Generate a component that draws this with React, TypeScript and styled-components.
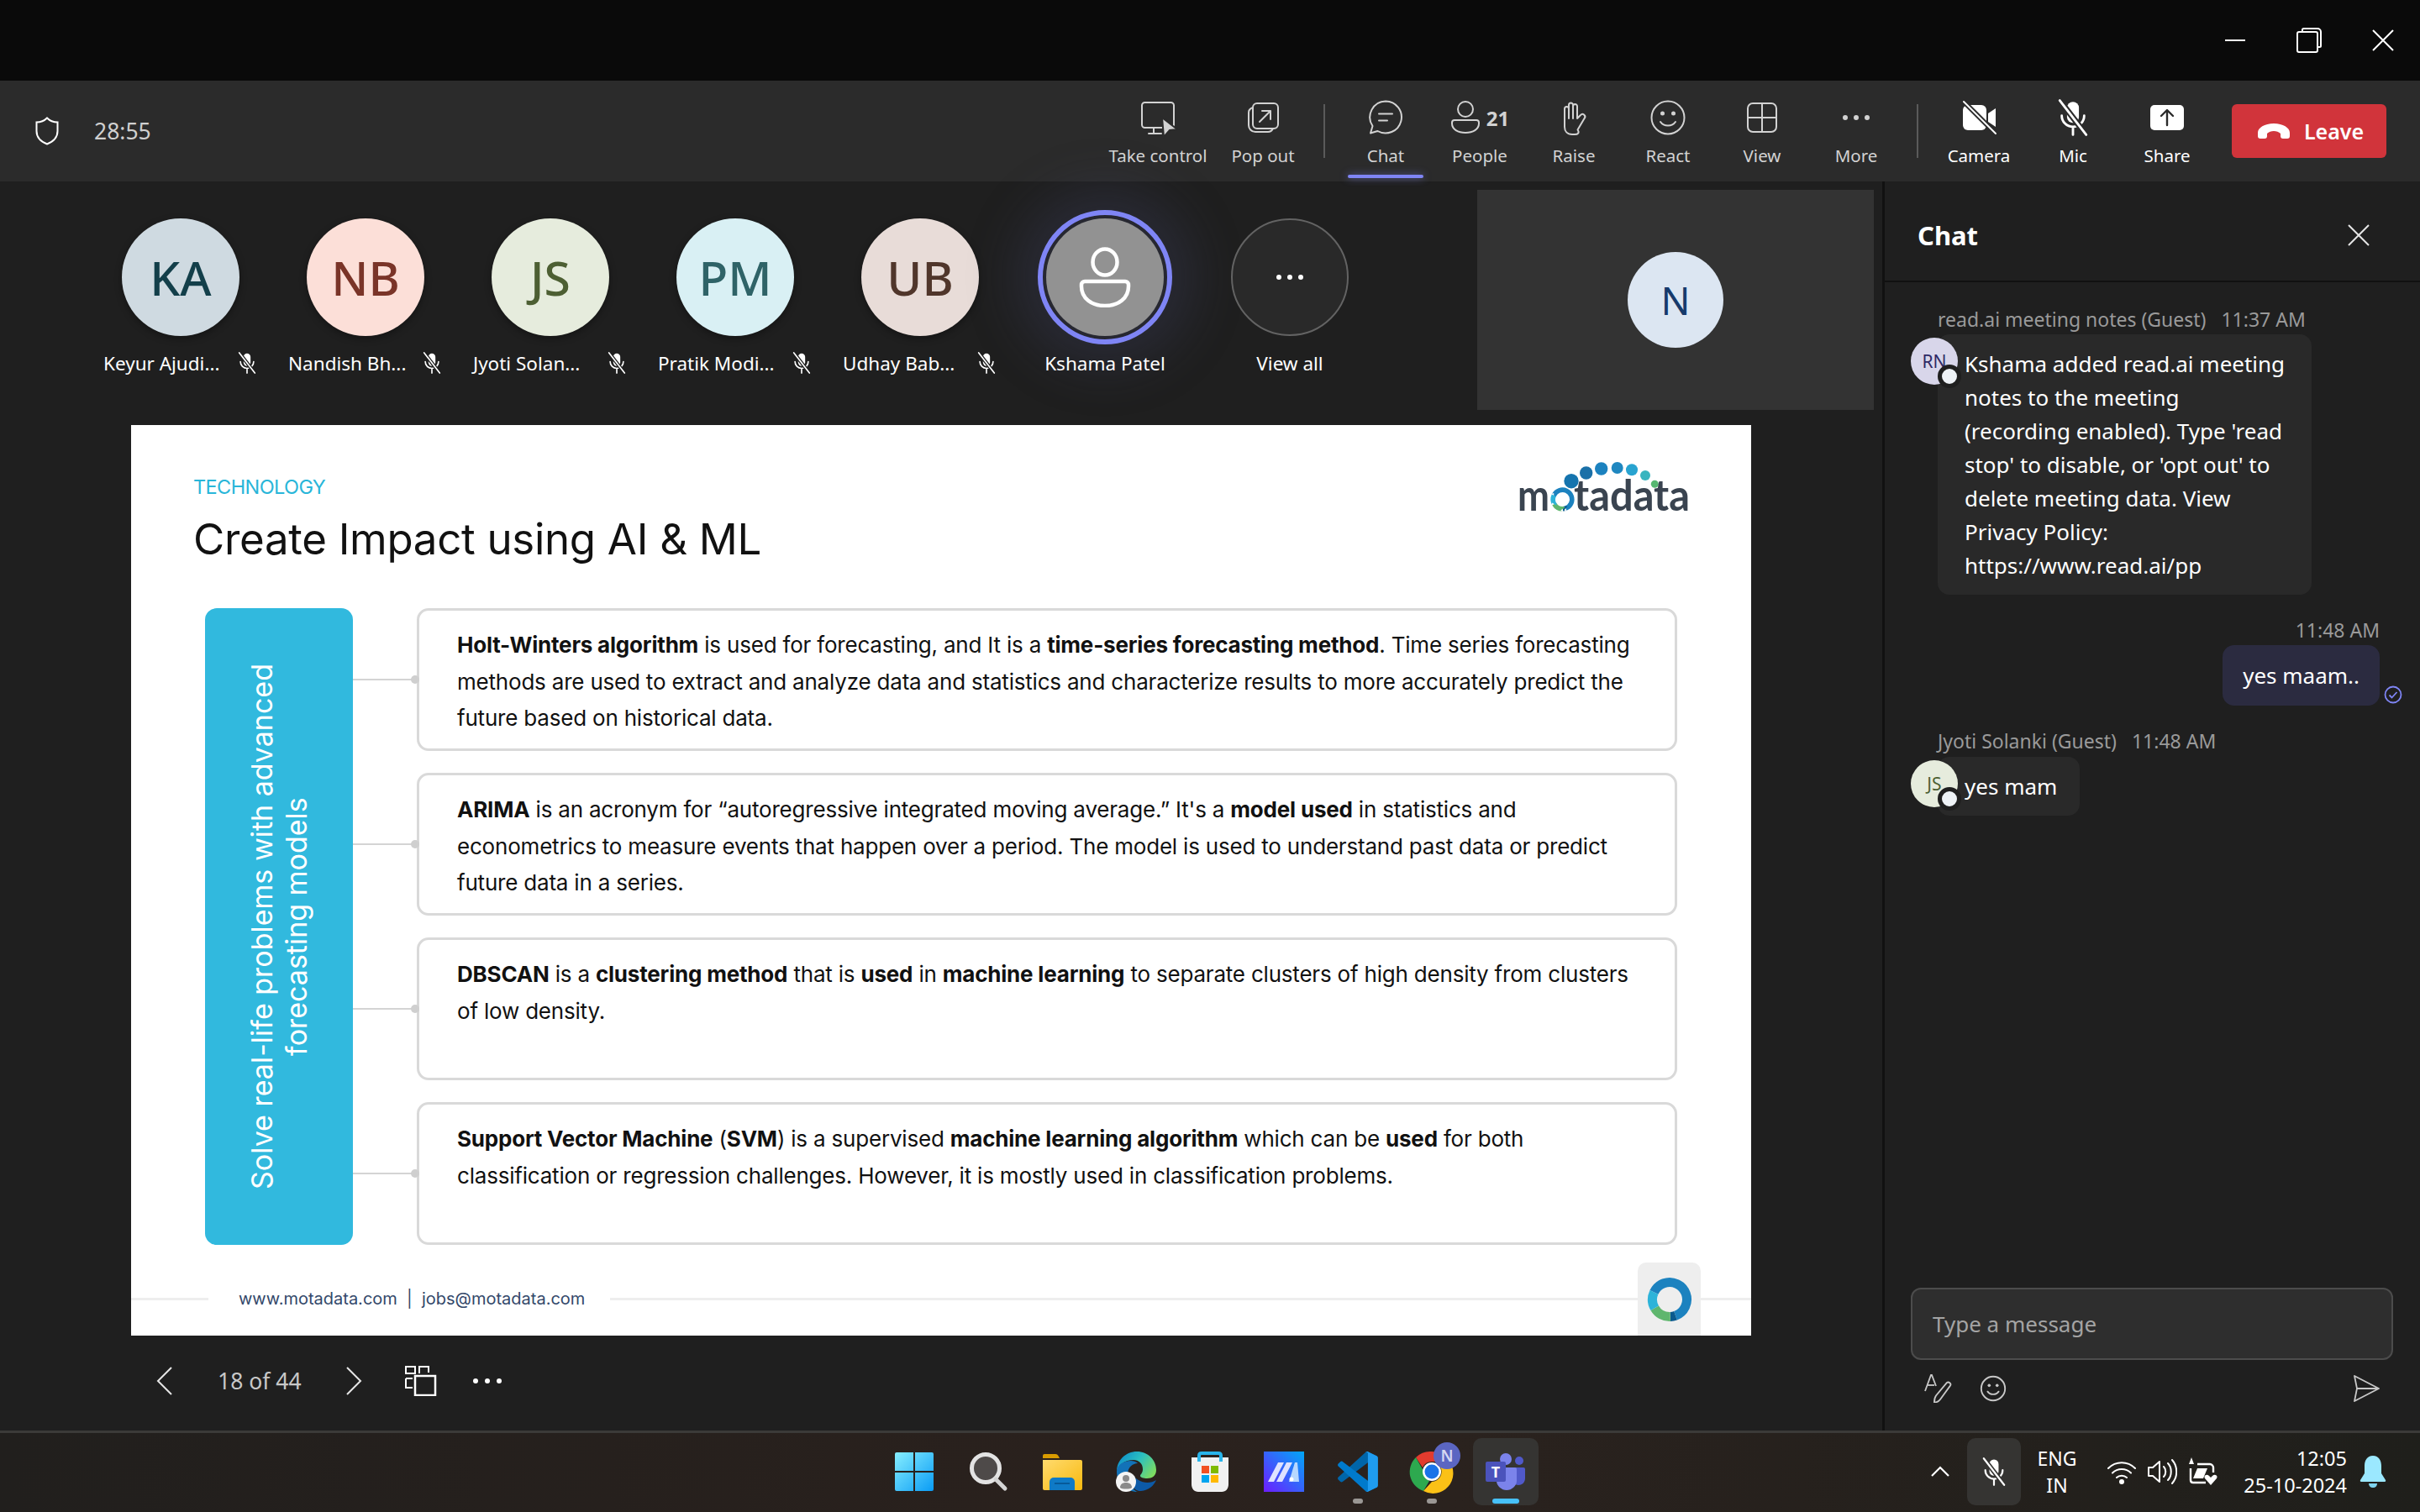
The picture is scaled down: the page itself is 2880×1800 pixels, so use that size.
import React from "react";
import styled, { createGlobalStyle } from "styled-components";

const GlobalStyle = createGlobalStyle`
  html, body {
    margin: 0;
    padding: 0;
    background: #1f1f1f;
  }
  * {
    box-sizing: border-box;
  }
`;

const Page = styled.div`
  width: 2880px;
  height: 1800px;
  display: grid;
  grid-template-rows: 96px 120px 1487px 97px;
  font-family: "Noto Sans", "Open Sans", sans-serif;
  color: #fff;
  overflow: hidden;
`;

/* title bar */
const TitleBar = styled.div`
  background: #0a0a0a;
  display: flex;
  justify-content: flex-end;
`;
const WindowButton = styled.div`
  width: 88px;
  display: flex;
  align-items: center;
  justify-content: center;
`;

/* meeting toolbar */
const Toolbar = styled.div`
  background: #2b2b2b;
  display: flex;
  align-items: stretch;
  padding-right: 40px;
`;
const Timer = styled.div`
  display: flex;
  align-items: center;
  gap: 42px;
  padding-left: 42px;
  margin-right: auto;
  font-size: 26.5px;
  color: #d0d0d0;
`;
const ToolItem = styled.div<{ $width?: number; $active?: boolean; $strong?: boolean }>`
  width: ${(p) => p.$width || 112}px;
  position: relative;
  display: flex;
  flex-direction: column;
  align-items: center;
  padding-top: 22px;
  font-size: 20.5px;
  color: ${(p) => (p.$strong ? "#fff" : "#d2d2d2")};
  ${(p) =>
    p.$active &&
    `&::after {
      content: "";
      position: absolute;
      left: 11px;
      right: 11px;
      bottom: 4px;
      height: 4px;
      border-radius: 2px;
      background: #7f85f5;
      box-shadow: 0 0 10px rgba(127, 133, 245, 0.6);
    }`}
`;
const ToolIcon = styled.div`
  height: 44px;
  display: flex;
  align-items: center;
  gap: 7px;
  font-size: 24px;
  font-weight: 700;
`;
const ToolLabel = styled.div`
  margin-top: 8px;
  line-height: 30px;
  white-space: nowrap;
`;
const ToolDivider = styled.div`
  width: 2px;
  height: 64px;
  margin: 28px 16px 0;
  background: #5a5a5a;
`;
const LeaveButton = styled.div`
  width: 184px;
  height: 64px;
  margin: 28px 0 0 21px;
  border-radius: 6px;
  background: #d1343b;
  display: flex;
  align-items: center;
  justify-content: center;
  gap: 16px;
  padding-left: 3px;
  font-size: 25px;
  font-weight: 600;
`;

/* main area */
const Main = styled.div`
  display: flex;
  background: #1f1f1f;
`;
const Stage = styled.div`
  width: 2240px;
  display: flex;
  flex-direction: column;
`;
const Strip = styled.div`
  height: 290px;
  display: flex;
  padding: 10px 10px 0 105px;
`;
const Participant = styled.div`
  width: 220px;
  padding-top: 34px;
  display: flex;
  flex-direction: column;
  align-items: center;
`;
const Bubble140 = styled.div<{ $bg: string; $fg: string }>`
  width: 140px;
  height: 140px;
  border-radius: 50%;
  background: ${(p) => p.$bg};
  color: ${(p) => p.$fg};
  display: flex;
  align-items: center;
  justify-content: center;
  font-size: 57px;
  font-weight: 500;
  box-shadow: 0 3px 8px rgba(0, 0, 0, 0.35);
`;
const ActiveBubble = styled(Bubble140)`
  outline: 6px solid #7f85f5;
  outline-offset: 4px;
  box-shadow: 0 0 60px 36px rgba(70, 72, 110, 0.28);
`;
const MoreBubble = styled(Bubble140)`
  border: 2px solid #636363;
  box-shadow: none;
`;
const NameRow = styled.div`
  margin-top: 14px;
  height: 36px;
  display: flex;
  align-items: center;
  font-size: 22.5px;
  white-space: nowrap;
`;
const NameText = styled.span<{ $cut?: boolean }>`
  width: ${(p) => (p.$cut ? "140px" : "auto")};
  margin-right: ${(p) => (p.$cut ? "18px" : "0")};
`;
const SelfTile = styled.div`
  width: 472px;
  height: 262px;
  margin-left: auto;
  background: #333333;
  display: flex;
  align-items: center;
  justify-content: center;
`;
const SelfAvatar = styled.div`
  width: 114px;
  height: 114px;
  border-radius: 50%;
  background: #dce6f2;
  color: #163a6b;
  display: flex;
  align-items: center;
  justify-content: center;
  font-size: 46px;
`;

/* the slide */
const Slide = styled.div`
  width: 1928px;
  height: 1084px;
  margin-left: 156px;
  background: #fff;
  color: #111;
  position: relative;
  font-family: Inter, "Open Sans", sans-serif;
  display: flex;
  flex-direction: column;
`;
const SlideHead = styled.div`
  height: 218px;
  padding: 42px 0 0 74px;
  display: flex;
  justify-content: space-between;
  align-items: flex-start;
  overflow: hidden;
`;
const HeadText = styled.div`
  padding-top: 17px;
`;
const Kicker = styled.div`
  font-size: 23.5px;
  line-height: 30px;
  letter-spacing: -0.6px;
  color: #29b6d9;
`;
const SlideTitle = styled.h1`
  margin: 15px 0 0;
  font-size: 51px;
  line-height: 64px;
  font-weight: 400;
  letter-spacing: -0.3px;
`;
const SlideBody = styled.div`
  height: 758px;
  padding: 0 88px;
  display: flex;
`;
const SidePanel = styled.div`
  width: 176px;
  border-radius: 14px;
  background: #31b9de;
  color: #fff;
  display: flex;
  align-items: center;
  justify-content: center;
  font-size: 34px;
  line-height: 41px;
  text-align: center;
  span {
    writing-mode: vertical-rl;
    transform: rotate(180deg);
    white-space: nowrap;
  }
`;
const Rows = styled.div`
  flex: 1;
  display: flex;
  flex-direction: column;
  gap: 26px;
`;
const Row = styled.div`
  flex: 1;
  display: flex;
  align-items: center;
`;
const Connector = styled.div`
  width: 76px;
  height: 2px;
  background: #d4d4d4;
  position: relative;
  &::after {
    content: "";
    position: absolute;
    right: -3px;
    top: -4px;
    width: 10px;
    height: 10px;
    border-radius: 50%;
    background: #cfcfcf;
  }
`;
const Card = styled.div`
  flex: 1;
  height: 100%;
  border: 3px solid #d9d9d9;
  border-radius: 14px;
  padding: 19px 30px 0 45px;
  font-size: 26px;
  line-height: 43.5px;
  letter-spacing: -0.2px;
  white-space: nowrap;
  b {
    font-weight: 700;
    letter-spacing: -0.2px;
  }
`;
const SlideFoot = styled.div`
  flex: 1;
  padding-top: 40px;
`;
const FootRow = styled.div`
  height: 48px;
  display: flex;
  align-items: center;
  color: #33486a;
  font-size: 20px;
`;
const FootRule = styled.div<{ $grow?: boolean }>`
  height: 3px;
  background: #eeeeee;
  width: ${(p) => (p.$grow ? "auto" : "92px")};
  flex: ${(p) => (p.$grow ? 1 : "none")};
`;
const FootText = styled.div`
  margin: 0 30px 0 36px;
  white-space: pre;
`;
const FootBadge = styled.div`
  position: absolute;
  right: 60px;
  bottom: 0;
  width: 75px;
  height: 87px;
  border-radius: 10px 10px 0 0;
  background: #eeeeee;
  display: flex;
  align-items: flex-start;
  justify-content: center;
  padding-top: 16px;
`;

/* slide pager */
const Pager = styled.div`
  height: 108px;
  display: flex;
  align-items: center;
  padding-left: 186px;
  color: #c8c8c8;
  font-size: 26.5px;
`;
const PagerCount = styled.div`
  width: 98px;
  margin: 0 54px 0 53px;
  white-space: nowrap;
`;

/* chat */
const ChatPanel = styled.div`
  width: 640px;
  border-left: 3px solid #111;
  display: flex;
  flex-direction: column;
`;
const ChatHead = styled.div`
  height: 120px;
  flex: none;
  border-bottom: 2px solid #111;
  padding: 10px 60px 0 39px;
  display: flex;
  align-items: center;
  justify-content: space-between;
  font-size: 31px;
  font-weight: 700;
`;
const MessageList = styled.div`
  flex: 1;
  padding: 29px 48px 0 63px;
`;
const Meta = styled.div<{ $right?: boolean }>`
  line-height: 30px;
  font-size: 23px;
  color: #9a9a9a;
  white-space: pre;
  text-align: ${(p) => (p.$right ? "right" : "left")};
`;
const InBubble = styled.div`
  position: relative;
  width: fit-content;
  margin-top: 3px;
  padding: 15px 32px;
  border-radius: 14px;
  background: #292929;
  font-size: 26px;
  line-height: 40px;
  white-space: nowrap;
`;
const ShortBubble = styled(InBubble)`
  margin-top: 4px;
  padding-right: 27px;
`;
const ChatAvatar = styled.div<{ $bg: string; $fg: string }>`
  position: absolute;
  left: -32px;
  top: 4px;
  width: 56px;
  height: 56px;
  border-radius: 50%;
  background: ${(p) => p.$bg};
  color: ${(p) => p.$fg};
  display: flex;
  align-items: center;
  justify-content: center;
  font-size: 21px;
  line-height: 1;
  &::after {
    content: "";
    position: absolute;
    right: -4px;
    bottom: -4px;
    width: 18px;
    height: 18px;
    border-radius: 50%;
    background: #eef2f6;
    border: 5px solid #1f1f1f;
    box-sizing: content-box;
  }
`;
const OutRow = styled.div`
  position: relative;
  display: flex;
  justify-content: flex-end;
  margin-top: 3px;
`;
const OutBubble = styled.div`
  height: 72px;
  padding: 0 24px;
  border-radius: 14px;
  background: #2b2b40;
  font-size: 26px;
  line-height: 72px;
  white-space: nowrap;
`;
const SentMark = styled.div`
  position: absolute;
  right: -27px;
  bottom: 2px;
  display: flex;
`;
const Composer = styled.div`
  padding: 0 32px 30px 31px;
`;
const InputBox = styled.div`
  height: 86px;
  border: 2px solid #4c4c4c;
  border-radius: 12px;
  background: #2e2e2e;
  padding-left: 24px;
  display: flex;
  align-items: center;
  font-size: 26px;
  color: #a4a4a4;
`;
const ComposerTools = styled.div`
  height: 40px;
  margin-top: 14px;
  padding: 0 16px;
  display: flex;
  align-items: center;
  gap: 32px;
`;
const SendIcon = styled.div`
  margin-left: auto;
  display: flex;
`;

/* windows taskbar */
const Taskbar = styled.div`
  border-top: 3px solid #3b3a38;
  padding: 6px 40px 0 1044px;
  display: flex;
  background: linear-gradient(90deg, #211f1d, #2a211d 45%, #2a221e 60%, #1f1f1b);
`;
const TaskSlot = styled.div<{ $active?: boolean; $dot?: boolean }>`
  width: 88px;
  height: 80px;
  position: relative;
  display: flex;
  align-items: center;
  justify-content: center;
  &::before {
    content: "";
    position: absolute;
    inset: 0 5px;
    border-radius: 10px;
    background: ${(p) => (p.$active ? "#353432" : "transparent")};
  }
  &::after {
    content: "";
    display: ${(p) => (p.$active || p.$dot ? "block" : "none")};
    position: absolute;
    bottom: 2px;
    left: 50%;
    transform: translateX(-50%);
    width: ${(p) => (p.$active ? "32px" : "12px")};
    height: 6px;
    border-radius: 3px;
    background: ${(p) => (p.$active ? "#47c1fa" : "#9a9794")};
  }
  svg {
    position: relative;
  }
`;
const Tray = styled.div`
  margin-left: auto;
  height: 80px;
  display: flex;
  align-items: center;
`;
const TrayMic = styled.div`
  width: 64px;
  height: 80px;
  margin-left: 20px;
  border-radius: 10px;
  background: #353432;
  display: flex;
  align-items: center;
  justify-content: center;
`;
const TrayLang = styled.div`
  width: 70px;
  margin: 0 24px 0 8px;
  font-size: 23px;
  line-height: 32px;
  text-align: center;
`;
const TrayIcons = styled.div`
  display: flex;
  gap: 12px;
`;
const Clock = styled.div`
  width: 154px;
  font-size: 23.5px;
  line-height: 32px;
  text-align: right;
`;
const Bell = styled.div`
  margin-left: 15px;
  display: flex;
`;

/* drawings */
const MicOff = ({ size, knock = "#1f1f1f" }: { size: number; knock?: string }) => (
  <svg width={size} height={size} viewBox="0 0 28 28" style={{ flex: "none" }}>
    <rect x="9.5" y="2" width="9" height="16" rx="4.5" fill="#fff" />
    <path d="M5.5 12.5a8.5 8.5 0 0 0 17 0M14 21v6" fill="none" stroke="#fff" strokeWidth="1.8" strokeLinecap="round" />
    <path d="M4 1l20 26" stroke={knock} strokeWidth="4.5" />
    <path d="M4 1l20 26" stroke="#fff" strokeWidth="1.8" strokeLinecap="round" />
  </svg>
);

const Ring = ({ cx, cy, r, w }: { cx: number; cy: number; r: number; w: number }) => {
  const parts: [number, number, string][] = [
    [-65, 160, "#1c82bf"],
    [160, 178, "#0a5a8e"],
    [178, 240, "#5fb66e"],
    [240, 295, "#2db3d9"],
  ];
  return (
    <g fill="none" strokeWidth={w}>
      {parts.map(([a, b, c]) => (
        <circle
          key={c}
          cx={cx}
          cy={cy}
          r={r}
          stroke={c}
          pathLength={360}
          strokeDasharray={`${b - a} ${360 - (b - a)}`}
          transform={`rotate(${a - 90} ${cx} ${cy})`}
        />
      ))}
    </g>
  );
};

const MotadataLogo = () => (
  <svg width="279" height="74" viewBox="0 0 279 74">
    <circle cx="65" cy="24.7" r="8.7" fill="#1574ae" />
    <circle cx="82.7" cy="15" r="7.7" fill="#1a70a8" />
    <circle cx="100.7" cy="10" r="7.7" fill="#1c82bf" />
    <circle cx="119.7" cy="9" r="7" fill="#1f87c0" />
    <circle cx="137" cy="11.3" r="7" fill="#28a3d0" />
    <circle cx="153" cy="18" r="6" fill="#39b5bf" />
    <circle cx="164.3" cy="28.3" r="4.5" fill="#57b871" />
    <g fontFamily="Lato, sans-serif" fontWeight="700" fontSize="52" fill="#3a4450">
      <text x="1" y="60" textLength="38" lengthAdjust="spacingAndGlyphs">m</text>
      <Ring cx={54.5} cy={46.5} r={11.3} w={5.6} />
      <text x="68" y="60" textLength="138" lengthAdjust="spacingAndGlyphs">tadata</text>
    </g>
  </svg>
);

const Stroke = { fill: "none", stroke: "#d2d2d2", strokeWidth: 2, strokeLinecap: "round" as const, strokeLinejoin: "round" as const };

const TakeControlIcon = () => (
  <svg width="44" height="44" viewBox="0 0 44 44" style={{ overflow: "visible" }}>
    <rect x="3" y="4" width="38" height="30" rx="3.5" {...Stroke} />
    <path d="M17 34v7M11 41h15" {...Stroke} />
    <path d="M27 22l18 14-9 1-7 8z" fill="#d2d2d2" stroke="#2b2b2b" strokeWidth="2" />
  </svg>
);
const PopOutIcon = () => (
  <svg width="44" height="44" viewBox="0 0 44 44">
    <rect x="10" y="5" width="30" height="30" rx="5" {...Stroke} />
    <path d="M10 10c-3 1-5 3-5 6v15c0 4 3 8 8 8h15c3 0 5-2 6-4" {...Stroke} />
    <path d="M18 27l13-13M21 14h10v10" {...Stroke} />
  </svg>
);
const ChatIcon = () => (
  <svg width="44" height="44" viewBox="0 0 44 44">
    <path d="M22 2.5a19 19 0 1 1-9.5 35.5L4 40.500l2.500-8.500A19 19 0 0 1 22 2.500z" {...Stroke} />
    <path d="M14 17.500h16M14 25.500h10" {...Stroke} />
  </svg>
);
const PeopleIcon = () => (
  <svg width="36" height="44" viewBox="0 0 36 44">
    <circle cx="18" cy="12" r="9" {...Stroke} />
    <path d="M5 25h26a3 3 0 0 1 3 3v1c0 7-7 11-16 11S2 36 2 29v-1a3 3 0 0 1 3-3z" {...Stroke} />
  </svg>
);
const RaiseIcon = () => (
  <svg width="44" height="44" viewBox="0 0 44 44">
    <path d="M11 25V11.500a2.500 2.500 0 0 1 5 0V7a2.500 2.500 0 0 1 5 0v1.500a2.500 2.500 0 0 1 5 0V23l4-4a3 3 0 0 1 4.500 4l-8 13.500C29 40 27 42 23 42h-3c-6 0-9-4-9-9z" {...Stroke} />
    <path d="M16 11.500V23M21 7v16" {...Stroke} />
  </svg>
);
const SmileIcon = ({ size = 44, color = "#d2d2d2", width = 2 }: { size?: number; color?: string; width?: number }) => (
  <svg width={size} height={size} viewBox="0 0 44 44">
    <circle cx="22" cy="22" r="19.500" fill="none" stroke={color} strokeWidth={width} />
    <circle cx="15.500" cy="17" r="2.500" fill={color} />
    <circle cx="28.500" cy="17" r="2.500" fill={color} />
    <path d="M13 27c2 3 5.500 4.500 9 4.500s7-1.500 9-4.500" fill="none" stroke={color} strokeWidth={width} strokeLinecap="round" />
  </svg>
);
const ViewIcon = () => (
  <svg width="44" height="44" viewBox="0 0 44 44">
    <rect x="5" y="5" width="34" height="34" rx="6" {...Stroke} />
    <path d="M22 5v34M5 22h34" {...Stroke} />
  </svg>
);
const DotsIcon = ({ color = "#d2d2d2" }: { color?: string }) => (
  <svg width="44" height="44" viewBox="0 0 44 44">
    <circle cx="9" cy="22" r="3" fill={color} />
    <circle cx="22" cy="22" r="3" fill={color} />
    <circle cx="35" cy="22" r="3" fill={color} />
  </svg>
);
const CameraOffIcon = () => (
  <svg width="44" height="44" viewBox="0 0 44 44">
    <rect x="3" y="7" width="28" height="30" rx="6" fill="#fff" />
    <path d="M33 17l9-6v22l-9-6z" fill="#fff" />
    <path d="M4 3l38 38" stroke="#2b2b2b" strokeWidth="6" />
    <path d="M4 3l38 38" stroke="#fff" strokeWidth="2" strokeLinecap="round" />
  </svg>
);
const ShareIcon = () => (
  <svg width="44" height="44" viewBox="0 0 44 44">
    <rect x="2" y="7" width="40" height="30" rx="5" fill="#fff" />
    <path d="M22 31V14M15 20l7-7 7 7" fill="none" stroke="#2b2b2b" strokeWidth="2.400" strokeLinecap="round" strokeLinejoin="round" />
  </svg>
);
const HangUpIcon = () => (
  <svg width="40" height="22" viewBox="0 0 40 22">
    <path d="M1 13c0-6 8-11 19-11s19 5 19 11v4c0 2-1 3-3 3h-5c-2 0-3-1-3-3v-3c-2-2-5-3-8-3s-6 1-8 3v3c0 2-1 3-3 3H4c-2 0-3-1-3-3z" fill="#fff" />
  </svg>
);
const PersonIcon = () => (
  <svg width="64" height="72" viewBox="0 0 64 72">
    <ellipse cx="32" cy="18" rx="14.500" ry="15.500" fill="none" stroke="#fff" strokeWidth="4.500" />
    <path d="M8 41h48a4 4 0 0 1 4 4v2c0 14-12 23-28 23S4 61 4 47v-2a4 4 0 0 1 4-4z" fill="none" stroke="#fff" strokeWidth="4.500" />
  </svg>
);

const StartIcon = () => (
  <svg width="48" height="48" viewBox="0 0 48 48">
    <defs>
      <linearGradient id="st" x1="0" y1="0" x2="1" y2="1">
        <stop offset="0" stopColor="#86eeff" />
        <stop offset="1" stopColor="#0a9cf5" />
      </linearGradient>
    </defs>
    <path d="M1 3a2 2 0 0 1 2-2h20v22H1zM25 1h20a2 2 0 0 1 2 2v20H25zM1 25h22v22H3a2 2 0 0 1-2-2zM25 25h22v20a2 2 0 0 1-2 2H25z" fill="url(#st)" />
  </svg>
);
const SearchIcon = () => (
  <svg width="48" height="48" viewBox="0 0 48 48" style={{ marginLeft: 2 }}>
    <circle cx="20" cy="20" r="16.500" fill="#4e4a49" stroke="#e3e3e3" strokeWidth="5" />
    <path d="M32 33l11 11" stroke="#d4d4d4" strokeWidth="5" strokeLinecap="round" />
  </svg>
);
const FolderIcon = () => (
  <svg width="48" height="48" viewBox="0 0 48 48">
    <defs>
      <linearGradient id="fd" x1="0" y1="0" x2="1" y2="1">
        <stop offset="0" stopColor="#ffdb6e" />
        <stop offset="1" stopColor="#f8b90f" />
      </linearGradient>
    </defs>
    <path d="M1 5a2 2 0 0 1 2-2h13c2 0 3 1 4 3l1 2h-20z" fill="#d99b00" />
    <path d="M1 10h45a2 2 0 0 1 2 2v32a2 2 0 0 1-2 2H3a2 2 0 0 1-2-2z" fill="url(#fd)" />
    <path d="M9 46v-10a5 5 0 0 1 5-5h20a5 5 0 0 1 5 5v10z" fill="#0f7ac6" />
    <path d="M15 38h18" stroke="#075a99" strokeWidth="2" />
  </svg>
);
const EdgeIcon = () => (
  <svg width="48" height="48" viewBox="0 0 48 48">
    <defs>
      <linearGradient id="ed" x1="0" y1="0.200" x2="1" y2="0.700">
        <stop offset="0" stopColor="#0c8ccb" />
        <stop offset="0.500" stopColor="#2cc0c0" />
        <stop offset="1" stopColor="#7ddb60" />
      </linearGradient>
    </defs>
    <path d="M1 24C1 10 12 0 25 0c13 0 23 10 23 22 0 7-5 10-11 10-4 0-8-1-8-3s3-3 3-8c0-7-5-11-11-11C11 10 2 16 1 24z" fill="url(#ed)" />
    <path d="M1 24c0-8 8-13 17-13 5 0 8 3 8 3-6 0-12 5-12 13 0 9 8 21 12 21C12 48 1 38 1 24z" fill="#1272b8" />
    <path d="M14 27c0 10 8 21 16 20 9-1 15-6 18-13-6 4-15 4-21 0-6-3-10-8-13-7z" fill="#0d5aa7" />
    <circle cx="12" cy="36" r="12" fill="#f4f4f4" />
    <circle cx="12" cy="32" r="4" fill="#8a8a8a" />
    <path d="M5 43c0-4 3-6 7-6s7 2 7 6c-2 2-12 2-14 0z" fill="#8a8a8a" />
  </svg>
);
const StoreIcon = () => (
  <svg width="48" height="48" viewBox="0 0 48 48">
    <path d="M2 7h44v32c0 5-3 9-8 9H10c-5 0-8-4-8-9z" fill="#f1f1f1" />
    <path d="M11 12V5c0-2 1-3 3-3h20c2 0 3 1 3 3v7" fill="none" stroke="#29b4ea" strokeWidth="4" />
    <rect x="14" y="17" width="9" height="9" fill="#f25022" />
    <rect x="25" y="17" width="9" height="9" fill="#7fba00" />
    <rect x="14" y="28" width="9" height="9" fill="#00a4ef" />
    <rect x="25" y="28" width="9" height="9" fill="#ffb900" />
  </svg>
);
const MailAppIcon = () => (
  <svg width="48" height="48" viewBox="0 0 48 48">
    <defs>
      <linearGradient id="ma" x1="0" y1="1" x2="1" y2="0">
        <stop offset="0" stopColor="#6d1dff" />
        <stop offset="1" stopColor="#00a8f8" />
      </linearGradient>
    </defs>
    <rect width="48" height="48" fill="url(#ma)" />
    <path d="M5 36L17 13h7L12 36zM15 36L27 13h7L22 36z" fill="#dfe2ff" />
    <path d="M30 36l7-23h3l2 23z" fill="#b7d8ff" />
    <circle cx="33" cy="33" r="2.500" fill="#fff" />
  </svg>
);
const VsCodeIcon = () => (
  <svg width="48" height="48" viewBox="0 0 100 100">
    <path d="M96.500 10.800L75.900.9C73.500-.3 70.600.2 68.800 2.100L1.400 63.600c-1.800 1.600-1.800 4.500 0 6.200l5.500 5C8.300 76.100 10.500 76.200 12 75L93.200 13.400c2.700-2.100 6.600-.1 6.600 3.300v-.2c0-2.400-1.300-4.600-3.300-5.700z" fill="#0065a9" />
    <path d="M96.500 89.200L75.900 99.100c-2.400 1.200-5.300.7-7.100-1.200L1.400 36.400c-1.800-1.600-1.800-4.500 0-6.200l5.500-5C8.300 23.900 10.500 23.800 12 25l81.200 61.600c2.700 2.100 6.600.1 6.600-3.300v.2c0 2.400-1.300 4.600-3.300 5.700z" fill="#007acc" />
    <path d="M75.900 99.100c-2.500 1.300-5.500.7-7.400-1.200 2.300 2.300 6.300.7 6.300-2.600V4.700c0-3.300-4-4.900-6.300-2.600 1.900-1.900 4.900-2.500 7.400-1.200l20.600 9.900c2 1 3.300 3.200 3.300 5.500v67.400c0 2.300-1.300 4.500-3.300 5.500z" fill="#1f9cf0" />
  </svg>
);
const ChromeIcon = () => (
  <svg width="48" height="48" viewBox="0 0 48 48" style={{ overflow: "visible" }}>
    <path d="M24 0a24 24 0 0 1 21 12H24a12 12 0 0 0-11 7L5 7A24 24 0 0 1 24 0z" fill="#e33b2e" />
    <path d="M5 7l9 16a12 12 0 0 0 7 12l-7 12A24 24 0 0 1 5 7z" fill="#2da94f" />
    <path d="M45 12a24 24 0 0 1-31 35l10-11a12 12 0 0 0 10-18z" fill="#fbc116" />
    <circle cx="24" cy="24" r="11" fill="#fff" />
    <circle cx="24" cy="24" r="8.500" fill="#1a73e8" />
    <circle cx="42" cy="5" r="16" fill="#5b66c2" />
    <text x="42" y="12" textAnchor="middle" fontFamily="Noto Sans, sans-serif" fontSize="19" fontWeight="600" fill="#d5d8f2">N</text>
  </svg>
);
const TeamsIcon = () => (
  <svg width="48" height="48" viewBox="0 0 48 48">
    <circle cx="40" cy="11" r="5" fill="#5059c9" />
    <path d="M31 19h14a2 2 0 0 1 2 2v11c0 5-4 8-8 8-4 0-8-3-8-8z" fill="#5059c9" />
    <circle cx="24" cy="9" r="7" fill="#7b83eb" />
    <path d="M13 19h22a2 2 0 0 1 2 2v14c0 6-6 11-12 11s-12-5-12-11z" fill="#7b83eb" />
    <rect x="0" y="12" width="24" height="24" rx="2" fill="#4b53bc" />
    <text x="12" y="31" textAnchor="middle" fontFamily="Noto Sans, sans-serif" fontSize="18" fontWeight="700" fill="#fff">T</text>
  </svg>
);

const people = [
  { name: "Keyur Ajudi...", short: "KA", bg: "#cfdae1", fg: "#133f4a" },
  { name: "Nandish Bh...", short: "NB", bg: "#fcdfd8", fg: "#7a3428" },
  { name: "Jyoti Solan...", short: "JS", bg: "#e6ecdd", fg: "#4d5f33" },
  { name: "Pratik Modi...", short: "PM", bg: "#d9f0f4", fg: "#2f6367" },
  { name: "Udhay Bab...", short: "UB", bg: "#e8dcd8", fg: "#50362b" },
];

const App = () => {
  return (
    <Page>
      <GlobalStyle />
      <TitleBar>
        <WindowButton>
          <svg width="24" height="4"><rect width="24" height="2" y="1" fill="#fff" /></svg>
        </WindowButton>
        <WindowButton>
          <svg width="30" height="30" viewBox="0 0 30 30">
            <path d="M7 5V2.500C7 1.700 7.700 1 8.500 1H25c2.200 0 4 1.800 4 4v16.500c0 .8-.7 1.500-1.500 1.500H25" fill="none" stroke="#fff" strokeWidth="2" />
            <rect x="1" y="5" width="24" height="24" rx="2" fill="none" stroke="#fff" strokeWidth="2" />
          </svg>
        </WindowButton>
        <WindowButton>
          <svg width="26" height="26" viewBox="0 0 26 26">
            <path d="M1 1l24 24M25 1L1 25" stroke="#fff" strokeWidth="2" />
          </svg>
        </WindowButton>
      </TitleBar>

      <Toolbar>
        <Timer>
          <svg width="28" height="34" viewBox="0 0 28 34">
            <path d="M14 1.500c3 3 7.500 5 12.500 5V17c0 7.500-5 12.500-12.500 15.500C6.500 29.500 1.500 24.500 1.500 17V6.500c5 0 9.500-2 12.500-5z" fill="none" stroke="#fff" strokeWidth="2" />
          </svg>
          <span>28:55</span>
        </Timer>
        <ToolItem $width={138}><ToolIcon><TakeControlIcon /></ToolIcon><ToolLabel>Take control</ToolLabel></ToolItem>
        <ToolItem><ToolIcon><PopOutIcon /></ToolIcon><ToolLabel>Pop out</ToolLabel></ToolItem>
        <ToolDivider />
        <ToolItem $active><ToolIcon><ChatIcon /></ToolIcon><ToolLabel>Chat</ToolLabel></ToolItem>
        <ToolItem><ToolIcon><PeopleIcon /><span>21</span></ToolIcon><ToolLabel>People</ToolLabel></ToolItem>
        <ToolItem><ToolIcon><RaiseIcon /></ToolIcon><ToolLabel>Raise</ToolLabel></ToolItem>
        <ToolItem><ToolIcon><SmileIcon /></ToolIcon><ToolLabel>React</ToolLabel></ToolItem>
        <ToolItem><ToolIcon><ViewIcon /></ToolIcon><ToolLabel>View</ToolLabel></ToolItem>
        <ToolItem><ToolIcon><DotsIcon /></ToolIcon><ToolLabel>More</ToolLabel></ToolItem>
        <ToolDivider />
        <ToolItem $strong><ToolIcon><CameraOffIcon /></ToolIcon><ToolLabel>Camera</ToolLabel></ToolItem>
        <ToolItem $strong><ToolIcon><MicOff size={44} knock="#2b2b2b" /></ToolIcon><ToolLabel>Mic</ToolLabel></ToolItem>
        <ToolItem $strong><ToolIcon><ShareIcon /></ToolIcon><ToolLabel>Share</ToolLabel></ToolItem>
        <LeaveButton><HangUpIcon />Leave</LeaveButton>
      </Toolbar>

      <Main>
        <Stage>
          <Strip>
            {people.map((p) => (
              <Participant key={p.short}>
                <Bubble140 $bg={p.bg} $fg={p.fg}>{p.short}</Bubble140>
                <NameRow>
                  <NameText $cut>{p.name}</NameText>
                  <MicOff size={26} />
                </NameRow>
              </Participant>
            ))}
            <Participant>
              <ActiveBubble $bg="#929292" $fg="#fff"><PersonIcon /></ActiveBubble>
              <NameRow><NameText>Kshama Patel</NameText></NameRow>
            </Participant>
            <Participant>
              <MoreBubble $bg="#292929" $fg="#fff"><DotsIcon color="#fff" /></MoreBubble>
              <NameRow><NameText>View all</NameText></NameRow>
            </Participant>
            <SelfTile><SelfAvatar>N</SelfAvatar></SelfTile>
          </Strip>

          <Slide>
            <SlideHead>
              <HeadText>
                <Kicker>TECHNOLOGY</Kicker>
                <SlideTitle>Create Impact using AI &amp; ML</SlideTitle>
              </HeadText>
              <MotadataLogo />
            </SlideHead>
            <SlideBody>
              <SidePanel>
                <span>
                  Solve real-life problems with advanced
                  <br />
                  forecasting models
                </span>
              </SidePanel>
              <Rows>
                <Row>
                  <Connector />
                  <Card>
                    <b>Holt-Winters algorithm</b> is used for forecasting, and It is a <b>time-series forecasting method</b>. Time series forecasting
                    <br />
                    methods are used to extract and analyze data and statistics and characterize results to more accurately predict the
                    <br />
                    future based on historical data.
                  </Card>
                </Row>
                <Row>
                  <Connector />
                  <Card>
                    <b>ARIMA</b> is an acronym for “autoregressive integrated moving average.” It's a <b>model used</b> in statistics and
                    <br />
                    econometrics to measure events that happen over a period. The model is used to understand past data or predict
                    <br />
                    future data in a series.
                  </Card>
                </Row>
                <Row>
                  <Connector />
                  <Card>
                    <b>DBSCAN</b> is a <b>clustering method</b> that is <b>used</b> in <b>machine learning</b> to separate clusters of high density from clusters
                    <br />
                    of low density.
                  </Card>
                </Row>
                <Row>
                  <Connector />
                  <Card>
                    <b>Support Vector Machine</b> (<b>SVM</b>) is a supervised <b>machine learning algorithm</b> which can be <b>used</b> for both
                    <br />
                    classification or regression challenges. However, it is mostly used in classification problems.
                  </Card>
                </Row>
              </Rows>
            </SlideBody>
            <SlideFoot>
              <FootRow>
                <FootRule />
                <FootText>www.motadata.com  |  jobs@motadata.com</FootText>
                <FootRule $grow />
              </FootRow>
            </SlideFoot>
            <FootBadge>
              <svg width="56" height="56" viewBox="0 0 56 56">
                <Ring cx={28} cy={28} r={20.500} w={11} />
              </svg>
            </FootBadge>
          </Slide>

          <Pager>
            <svg width="20" height="34" viewBox="0 0 20 34"><path d="M18 1L2 17l16 16" fill="none" stroke="#e6e6e6" strokeWidth="2" /></svg>
            <PagerCount>18 of 44</PagerCount>
            <svg width="20" height="34" viewBox="0 0 20 34"><path d="M2 1l16 16L2 33" fill="none" stroke="#e6e6e6" strokeWidth="2" /></svg>
            <svg width="38" height="36" viewBox="0 0 38 36" style={{ marginLeft: 51 }}>
              <path d="M1 1h11v8H1zM17 9V1h11v7M1 15h8M1 15v11h8" fill="none" stroke="#fff" strokeWidth="2" />
              <rect x="12" y="12" width="24" height="23" fill="none" stroke="#fff" strokeWidth="2.500" />
            </svg>
            <svg width="36" height="10" viewBox="0 0 36 10" style={{ marginLeft: 42 }}>
              <circle cx="4" cy="5" r="3" fill="#fff" />
              <circle cx="18" cy="5" r="3" fill="#fff" />
              <circle cx="32" cy="5" r="3" fill="#fff" />
            </svg>
          </Pager>
        </Stage>

        <ChatPanel>
          <ChatHead>
            <span>Chat</span>
            <svg width="26" height="26" viewBox="0 0 26 26"><path d="M1 1l24 24M25 1L1 25" stroke="#e6e6e6" strokeWidth="2" /></svg>
          </ChatHead>
          <MessageList>
            <Meta>read.ai meeting notes (Guest)   11:37 AM</Meta>
            <InBubble>
              <ChatAvatar $bg="#d8d6ea" $fg="#2f2a66">RN</ChatAvatar>
              Kshama added read.ai meeting
              <br />
              notes to the meeting
              <br />
              (recording enabled). Type 'read
              <br />
              stop' to disable, or 'opt out' to
              <br />
              delete meeting data. View
              <br />
              Privacy Policy:
              <br />
              https://www.read.ai/pp
            </InBubble>
            <Meta $right style={{ marginTop: 27 }}>11:48 AM</Meta>
            <OutRow>
              <OutBubble>yes maam..</OutBubble>
              <SentMark>
                <svg width="22" height="22" viewBox="0 0 22 22">
                  <circle cx="11" cy="11" r="9.500" fill="none" stroke="#7f85f5" strokeWidth="1.800" />
                  <path d="M6.500 11.500l3 3 6-6.500" fill="none" stroke="#7f85f5" strokeWidth="1.800" />
                </svg>
              </SentMark>
            </OutRow>
            <Meta style={{ marginTop: 27 }}>Jyoti Solanki (Guest)   11:48 AM</Meta>
            <ShortBubble>
              <ChatAvatar $bg="#e6ecdd" $fg="#4d5f33">JS</ChatAvatar>
              yes mam
            </ShortBubble>
          </MessageList>
          <Composer>
            <InputBox>Type a message</InputBox>
            <ComposerTools>
              <svg width="34" height="34" viewBox="0 0 34 34">
                <path d="M1 20L8 1h1l5 13" fill="none" stroke="#c8c8c8" strokeWidth="1.800" />
                <path d="M4 13h8" stroke="#c8c8c8" strokeWidth="1.800" />
                <path d="M27 10c2-1.500 5.500 1 4 3.500L19 30c-1.500 2-5 3.500-7 3.500 0-2 .5-6 2-8z" fill="none" stroke="#c8c8c8" strokeWidth="1.900" />
              </svg>
              <SmileIcon size={32} color="#c8c8c8" width={2.600} />
              <SendIcon>
                <svg width="32" height="32" viewBox="0 0 32 32">
                  <path d="M2 1l29 15L2 31l3-15zM5 16h26" fill="none" stroke="#c8c8c8" strokeWidth="1.800" strokeLinejoin="round" />
                </svg>
              </SendIcon>
            </ComposerTools>
          </Composer>
        </ChatPanel>
      </Main>

      <Taskbar>
        <TaskSlot><StartIcon /></TaskSlot>
        <TaskSlot><SearchIcon /></TaskSlot>
        <TaskSlot><FolderIcon /></TaskSlot>
        <TaskSlot><EdgeIcon /></TaskSlot>
        <TaskSlot><StoreIcon /></TaskSlot>
        <TaskSlot><MailAppIcon /></TaskSlot>
        <TaskSlot $dot><VsCodeIcon /></TaskSlot>
        <TaskSlot $dot><ChromeIcon /></TaskSlot>
        <TaskSlot $active><TeamsIcon /></TaskSlot>
        <Tray>
          <svg width="24" height="14" viewBox="0 0 24 14"><path d="M2 12L12 2l10 10" fill="none" stroke="#fff" strokeWidth="2.200" /></svg>
          <TrayMic><MicOff size={34} knock="#353432" /></TrayMic>
          <TrayLang>ENG<br />IN</TrayLang>
          <TrayIcons>
            <svg width="36" height="36" viewBox="0 0 36 36">
              <path d="M2 14c9-9 23-9 32 0M7 19.500c6-6 16-6 22 0M12 25c3-3 9-3 12 0" fill="none" stroke="#fff" strokeWidth="2" strokeLinecap="round" />
              <circle cx="18" cy="30" r="3" fill="#fff" />
            </svg>
            <svg width="36" height="36" viewBox="0 0 36 36">
              <path d="M2 13v10h5l8 7V6l-8 7z" fill="none" stroke="#fff" strokeWidth="2" strokeLinejoin="round" />
              <path d="M20 12c3 3 3 9 0 12M25 8c5 5 5 15 0 20M30 4c7 8 7 20 0 28" fill="none" stroke="#fff" strokeWidth="2" strokeLinecap="round" />
            </svg>
            <svg width="36" height="36" viewBox="0 0 36 36">
              <path d="M12 9h15c2 0 4 2 4 4v6M4 14v14c0 2 1 3 3 3h15" fill="none" stroke="#fff" strokeWidth="2.400" />
              <path d="M5 1l3 8H2zM12 14h12l-5 12H7z" fill="#fff" />
              <path d="M28 34l-7-8c-2-3 2-6 5-3l2 2 2-2c3-3 7 0 5 3z" fill="#fff" />
            </svg>
          </TrayIcons>
          <Clock>12:05<br />25-10-2024</Clock>
          <Bell>
            <svg width="32" height="40" viewBox="0 0 32 40">
              <path d="M16 1c7 0 10 6 10 12v9l5 8c.5 1 0 2-1 2H2c-1 0-1.500-1-1-2l5-8v-9C6 7 9 1 16 1z" fill="#9be8ff" />
              <path d="M11 34h10c0 3-2 5-5 5s-5-2-5-5z" fill="#7fd4ee" />
            </svg>
          </Bell>
        </Tray>
      </Taskbar>
    </Page>
  );
};

export default App;
